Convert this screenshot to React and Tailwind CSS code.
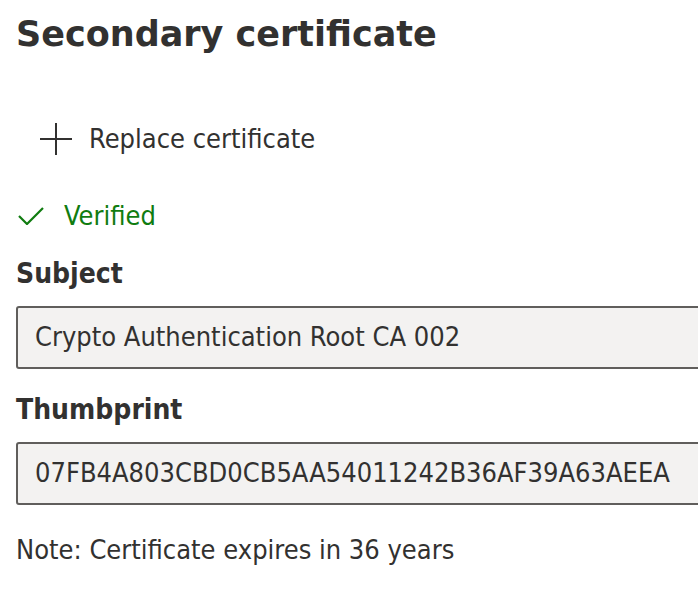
import React from 'react';

const FONT = "font-['DejaVu_Sans_Condensed','DejaVu_Sans',sans-serif]";

function PlusIcon() {
  return (
    <svg width="32" height="32" viewBox="0 0 32 32" className="shrink-0">
      <path d="M16 0v32M0 16h32" stroke="#323130" strokeWidth="2" fill="none" />
    </svg>
  );
}

function CheckIcon() {
  return (
    <svg width="26" height="18" viewBox="0 0 26 18" className="shrink-0">
      <path d="M1 9l8 8L25 1" stroke="#107c10" strokeWidth="2.2" fill="none" />
    </svg>
  );
}

function Field({ label, value, boxGap }) {
  return (
    <div>
      <div className="text-[28px] font-bold leading-[38px] text-[#323130]">{label}</div>
      <div className="mt-[13px] h-[63px] w-[720px] rounded-[3px] border-2 border-[#605e5c] bg-[#f3f2f1] pl-[17px] flex items-center text-[27px] text-[#323130]">
        {value}
      </div>
    </div>
  );
}

export default function App() {
  return (
    <div className={`${FONT} w-[698px] h-[594px] overflow-hidden bg-white pl-[16px] text-[#323130]`}>
      <h1 className="pt-[10px] font-['DejaVu_Sans',sans-serif] text-[35px] font-bold leading-[48px] text-[#323130]">
        Secondary certificate
      </h1>

      <button className="mt-[65px] ml-[24px] flex items-center gap-[17px] text-[27px] leading-[32px] text-[#323130]">
        <PlusIcon />
        <span>Replace certificate</span>
      </button>

      <div className="mt-[45px] flex items-center gap-[20px] text-[27px] leading-[32px] text-[#107c10]">
        <span className="ml-[2px]">
          <CheckIcon />
        </span>
        <span>Verified</span>
      </div>

      <div className="mt-[23px] flex flex-col gap-[22px]">
        <Field label="Subject" value="Crypto Authentication Root CA 002" />
        <Field label="Thumbprint" value="07FB4A803CBD0CB5AA54011242B36AF39A63AEEA" />
      </div>

      <p className="mt-[29px] text-[27px] leading-[32px] text-[#323130]">Note: Certificate expires in 36 years</p>
    </div>
  );
}
